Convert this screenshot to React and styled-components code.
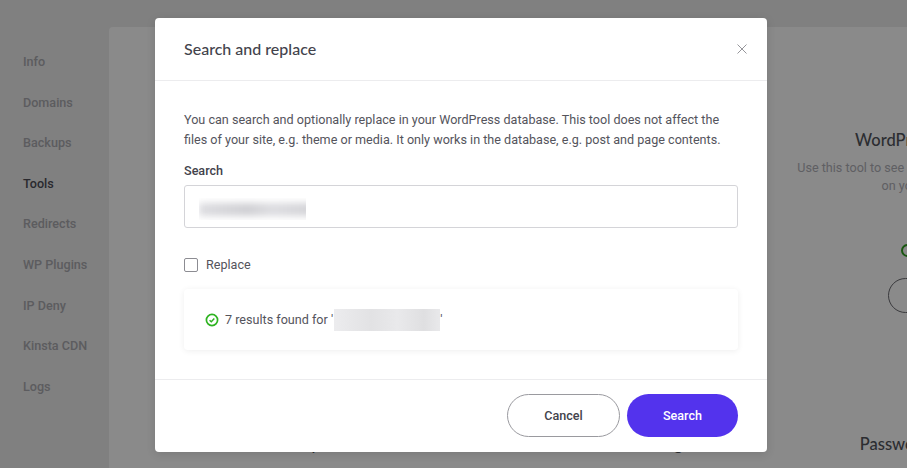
import React from 'react';
import styled, { createGlobalStyle } from 'styled-components';

const NAV_ITEMS = ['Info', 'Domains', 'Backups', 'Tools', 'Redirects', 'WP Plugins', 'IP Deny', 'Kinsta CDN', 'Logs'];

const TILES = [
  { id: 'cache', title: 'Site cache', text: 'Clear the cache of your site here' },
  { id: 'restart', title: 'Restart PHP', text: 'Restart the PHP engine of your site' },
  { id: 'debug', title: 'WordPress debugging', text: 'Use this tool to see PHP errors, warnings, notices on your WordPress', status: 'Disabled', action: 'Enable' },
  { id: 'preview', title: 'Site preview', text: 'Let others take a look at this site before it is live' },
  { id: 'https', title: 'HTTPS Setting', text: 'Send all of the visitors to a secure address' },
  { id: 'password', title: 'Password protection', text: 'Add a simple login in front of your site' },
];

const GlobalStyle = createGlobalStyle`
  html, body {
    margin: 0;
    padding: 0;
    height: 468px;
    overflow: hidden;
    font-family: Roboto, "Liberation Sans", sans-serif;
  }
`;

const Page = styled.div`
  position: relative;
  display: flex;
  width: 907px;
  height: 468px;
  overflow: hidden;
  background: #e9e9ea;
`;

const Sidebar = styled.nav`
  display: flex;
  flex-direction: column;
  flex: 0 0 109px;
  padding: 51px 0 0 23px;
  box-sizing: border-box;
`;

const NavItem = styled.a`
  height: 40.6px;
  line-height: 21px;
  font-size: 12.6px;
  font-weight: 500;
  color: ${(p) => (p.$active ? '#4c4c55' : '#a8a8ad')};
`;

const MainCard = styled.main`
  flex: 0 0 auto;
  display: grid;
  grid-template-columns: repeat(3, 305px);
  grid-auto-rows: 304px;
  width: 1100px;
  margin-top: 27px;
  padding: 103px 0 0 63px;
  box-sizing: border-box;
  background: #fbfbfb;
  border-radius: 4px 0 0 0;
`;

const Tile = styled.section`
  display: flex;
  flex-direction: column;
  align-items: center;
  text-align: center;
  padding: 0 5px;

  &:nth-child(n + 4) p {
    margin-top: 11px;
  }
`;

const TileTitle = styled.h3`
  margin: 0;
  height: 21px;
  line-height: 21px;
  font-family: Lato, sans-serif;
  font-size: 16.5px;
  font-weight: 500;
  white-space: nowrap;
  color: #50535a;
`;

const TileText = styled.p`
  margin: 8px 0 0;
  width: 280px;
  font-size: 12.6px;
  line-height: 18px;
  color: #aeaeb5;
`;

const TileStatus = styled.div`
  display: flex;
  align-items: center;
  gap: 6px;
  height: 14px;
  margin-top: 48px;
  font-size: 12.6px;
  color: #777;
`;

const StatusDot = styled.span`
  width: 9px;
  height: 9px;
  border: 2px solid #2f9e1f;
  border-radius: 50%;
`;

const TileButton = styled.button`
  width: 94px;
  height: 35px;
  margin-top: 21px;
  border: 1px solid #6a6a70;
  border-radius: 18px;
  background: transparent;
  font: 500 12.6px Roboto, sans-serif;
  color: #50535a;
`;

const Overlay = styled.div`
  position: absolute;
  inset: 0;
  padding: 18px 0 0 155px;
  background: rgba(0, 0, 0, 0.45);
`;

const Modal = styled.div`
  width: 612px;
  height: 434px;
  display: flex;
  flex-direction: column;
  background: #fff;
  border-radius: 4px;
  box-shadow: 0 2px 10px rgba(0, 0, 0, 0.12);
`;

const ModalHeader = styled.header`
  flex: 0 0 63px;
  display: flex;
  align-items: center;
  justify-content: space-between;
  padding: 0 20px 1px 29px;
  box-sizing: border-box;
  border-bottom: 1px solid #ececee;
`;

const ModalTitle = styled.h2`
  margin: 0;
  font-family: Lato, sans-serif;
  font-size: 16px;
  font-weight: 500;
  color: #43434c;
`;

const CloseButton = styled.button`
  display: flex;
  padding: 0;
  border: 0;
  background: none;
  color: #96969b;
`;

const ModalBody = styled.div`
  flex: 1;
  display: flex;
  flex-direction: column;
  padding: 29px 29px 0;
  border-bottom: 1px solid #ececee;
`;

const Intro = styled.p`
  margin: 0;
  font-size: 12.6px;
  line-height: 19.5px;
  color: #54545c;
`;

const FieldLabel = styled.label`
  margin-top: 12px;
  font-size: 12.6px;
  font-weight: 500;
  line-height: 19px;
  color: #43434c;
`;

const SearchField = styled.div`
  display: flex;
  align-items: center;
  height: 43px;
  margin-top: 5px;
  padding: 5px 0 0 13px;
  box-sizing: border-box;
  border: 1px solid #d4d4d8;
  border-radius: 3px;
`;

const BlurClip = styled.span`
  display: flex;
  align-items: center;
  flex: none;
  width: ${(p) => p.$width}px;
  height: 22px;
  margin-left: 1px;
  overflow: hidden;
`;

const BlurredValue = styled.span`
  flex: none;
  width: ${(p) => p.$width}px;
  height: ${(p) => p.$height}px;
  background: ${(p) => p.$fill};
  filter: blur(${(p) => p.$blur}px);
`;

const CheckRow = styled.label`
  display: flex;
  align-items: center;
  gap: 8px;
  margin-top: 28px;
  font-size: 12.6px;
  line-height: 18px;
  color: #54545c;
`;

const CheckBox = styled.span`
  width: 14px;
  height: 14px;
  box-sizing: border-box;
  border: 1px solid #8c8c92;
  border-radius: 2px;
`;

const ResultCard = styled.div`
  display: flex;
  align-items: center;
  height: 61px;
  margin-top: 15px;
  padding-left: 21px;
  box-sizing: border-box;
  border-radius: 4px;
  font-size: 12.6px;
  color: #54545c;
  box-shadow: 0 1px 6px rgba(0, 0, 0, 0.07);
`;

const ResultIcon = styled.svg`
  flex: none;
  margin-right: 6px;
`;

const ModalFooter = styled.footer`
  flex: 0 0 72px;
  display: flex;
  justify-content: flex-end;
  gap: 7px;
  padding: 14px 29px 0 0;
  box-sizing: border-box;
`;

const PillButton = styled.button`
  width: ${(p) => p.$width}px;
  height: 43px;
  border-radius: 22px;
  border: ${(p) => (p.$primary ? '0' : '1px solid #9a9a9f')};
  background: ${(p) => (p.$primary ? '#5333ed' : '#fff')};
  color: ${(p) => (p.$primary ? '#fff' : '#43434c')};
  font: 500 12.6px Roboto, sans-serif;
`;

const App = () => (
  <>
    <GlobalStyle />
    <Page>
      <Sidebar>
        {NAV_ITEMS.map((item) => (
          <NavItem key={item} $active={item === 'Tools'}>{item}</NavItem>
        ))}
      </Sidebar>
      <MainCard>
        {TILES.map((t) => (
          <Tile key={t.id}>
            <TileTitle>{t.title}</TileTitle>
            <TileText>{t.text}</TileText>
            {t.status && (
              <TileStatus>
                <StatusDot />
                {t.status}
              </TileStatus>
            )}
            {t.action && <TileButton>{t.action}</TileButton>}
          </Tile>
        ))}
      </MainCard>
      <Overlay>
        <Modal>
          <ModalHeader>
            <ModalTitle>Search and replace</ModalTitle>
            <CloseButton aria-label="Close">
              <svg width="10" height="10" viewBox="0 0 10 10" fill="none" stroke="currentColor" strokeWidth="1">
                <path d="M0.5 0.5l9 9M9.5 0.5l-9 9" />
              </svg>
            </CloseButton>
          </ModalHeader>
          <ModalBody>
            <Intro>
              You can search and optionally replace in your WordPress database. This tool does not affect the
              <br />
              files of your site, e.g. theme or media. It only works in the database, e.g. post and page contents.
            </Intro>
            <FieldLabel>Search</FieldLabel>
            <SearchField>
              <BlurClip $width={107}>
                <BlurredValue
                  $width={122}
                  $height={13}
                  $blur={3.5}
                  $fill="linear-gradient(90deg, #dcdce0, #cfcfd3 40%, #dcdce0 60%, #d0d0d4)"
                />
              </BlurClip>
            </SearchField>
            <CheckRow>
              <CheckBox />
              Replace
            </CheckRow>
            <ResultCard>
              <ResultIcon width="14" height="14" viewBox="0 0 14 14" fill="none" stroke="#2eb321">
                <circle cx="7" cy="7" r="5.6" strokeWidth="1.7" />
                <path d="M4.6 7.2l1.7 1.6 3-3.2" strokeWidth="1.5" />
              </ResultIcon>
              7 results found for '
              <BlurClip $width={106}>
                <BlurredValue
                  $width={106}
                  $height={22}
                  $blur={0}
                  $fill="linear-gradient(90deg, #ececee, #e2e2e4 35%, #e9e9eb 60%, #dfdfe1 85%, #e9e9eb)"
                />
              </BlurClip>
              '
            </ResultCard>
          </ModalBody>
          <ModalFooter>
            <PillButton $width={113}>Cancel</PillButton>
            <PillButton $width={111} $primary>Search</PillButton>
          </ModalFooter>
        </Modal>
      </Overlay>
    </Page>
  </>
);

export default App;
